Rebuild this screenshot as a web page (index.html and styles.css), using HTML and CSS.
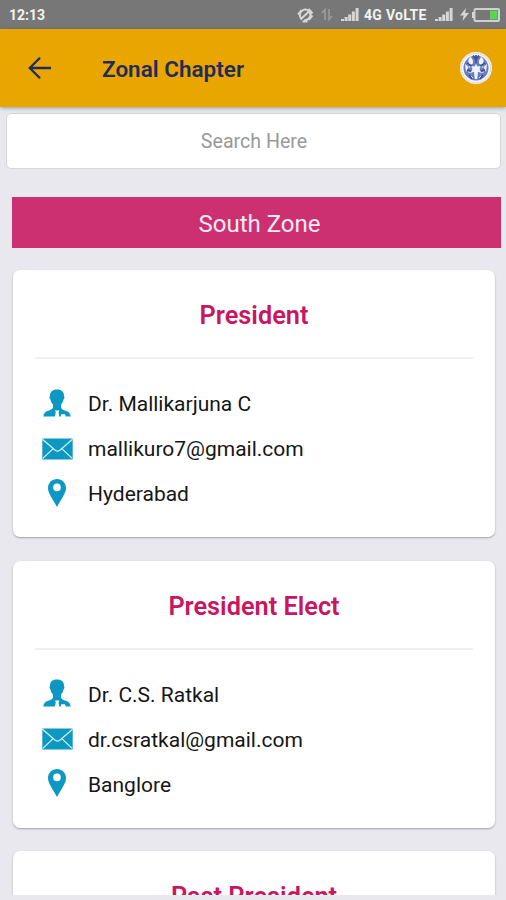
FILE: index.html
```html
<!DOCTYPE html>
<html lang="en">
<head>
    <meta charset="UTF-8">
    <meta name="viewport" content="width=device-width, initial-scale=1.0">
    <title>Zonal Chapter</title>
    <link rel="stylesheet" href="styles.css">
</head>
<body>

    <!-- Icons shared by the cards -->
    <svg class="icon-defs" width="0" height="0">
        <symbol id="icon-user" viewBox="0 0 28 28">
            <path d="M14 .5c-4.800 0-7 2.300-7 6.500-.8.700-.6 2.500.5 3.400.5 2.400 1.300 3.900 2.500 5v3.400c-1 1.800-3.200 2.400-5.600 3.300C2 23.100.8 24.300.3 27.500h11.600l.9-4.200-.8-1.800h4.400l-.8 1.800.5 4.200h1.700l.2-2.200h3.800l1.200 2.200h4.700c-.5-3.200-1.700-4.400-4.300-5.400-2.400-.9-4.400-1.500-5.400-3.300v-3.400c1.200-1.100 2-2.600 2.500-5 1.100-.9 1.300-2.700.5-3.400 0-4.200-2.200-6.500-7-6.500z"/>
        </symbol>
        <symbol id="icon-mail" viewBox="0 0 31 22">
            <rect x="0.3" y="0.5" width="30.4" height="21" rx="0.5"/>
            <path class="fold" d="M0.500 1.200L13.200 12.200Q15.500 14 17.800 12.200L30.500 1.200M0.800 20.400L11.200 10.600M30.200 20.400L19.800 10.600"/>
        </symbol>
        <symbol id="icon-pin" viewBox="0 0 18 28">
            <path fill-rule="evenodd" d="M9 0C4 0 0 3.900 0 8.900 0 14 4.500 19.500 9 28c4.500-8.500 9-14 9-19.100C18 3.900 14 0 9 0zm0 4.600a3.800 3.800 0 1 1 0 7.600 3.800 3.800 0 0 1 0-7.600z"/>
        </symbol>
        <symbol id="icon-signal" viewBox="0 0 18 13">
            <path d="M0 13v-2h3v2zM3.600 13V9h3v4zM7.200 13V6.500h3V13zM10.900 13V3.500h3V13zM14.600 13V0h3v13z"/>
        </symbol>
    </svg>

    <div class="screen">

        <!-- Status Bar -->
        <div class="status-bar">
            <span class="clock">12:13</span>
            <div class="status-icons">
                <svg class="mute" width="17" height="16" viewBox="0 0 17 16">
                    <path d="M4 11.500C1.500 7.500 3.500 3.500 7.500 2.500 11 2 13 4.500 13.500 8c-.5 3-2.500 5-6.500 5.500M1 7.500L4.500 3M11.500 2l4 4.500M15.500 8.500L12 13M5.500 14.500h5M3.500 12.500L13 3.500"/>
                </svg>
                <svg class="data" width="12" height="13" viewBox="0 0 12 13">
                    <path d="M4 12V1.500L1 5M8 1v10.500L11 8"/>
                </svg>
                <svg class="signal" width="18" height="13"><use href="#icon-signal"/></svg>
                <span class="network">4G VoLTE</span>
                <svg class="signal" width="18" height="13"><use href="#icon-signal"/></svg>
                <svg class="bolt" width="9" height="13" viewBox="0 0 9 13">
                    <path d="M6 0L0 7.500h3.600L2.500 13 9 5H5.200z"/>
                </svg>
                <svg class="battery" width="28" height="14" viewBox="0 0 28 14">
                    <rect class="case" x="2.500" y="1" width="24.500" height="12" rx="1"/>
                    <rect class="tip" x="0" y="4" width="2" height="6"/>
                    <rect class="charge" x="18" y="2.500" width="7.500" height="9"/>
                </svg>
            </div>
        </div>

        <!-- Header -->
        <div class="header">
            <svg class="back" width="24" height="24" viewBox="0 0 24 24">
                <path d="M23 12H2M12 1.800L1.800 12 12 22.200"/>
            </svg>
            <h1>Zonal Chapter</h1>
            <svg class="logo" width="34" height="34" viewBox="0 0 34 34">
                <circle class="disc" cx="17" cy="17" r="16"/>
                <circle class="ring" cx="17" cy="17" r="14.600"/>
                <circle class="inner" cx="17" cy="17" r="12.500"/>
                <path class="white" d="M12 6c-3 1-3.500 5-1 7.500 2.500.5 3.500-1.500 3-4zM22 6c3 1 3.500 5 1 7.500-2.500.5-3.500-1.500-3-4zM17 13l1.500 2.500 3.500-.5-1.500 3 1.500 3.500-3-.5-.8 7h-2.400l-.8-7-3 .5 1.500-3.500-1.500-3 3.500.5zM6 13l3.500 3L7 21zM28 13l-3.500 3 2.500 5z"/>
                <path class="lines" d="M17 4v8M14 4.500l3 4 3-4M8 12l5 3M26 12l-5 3M10 24l3 4M24 24l-3 4M8 19l4 1M26 19l-4 1"/>
                <path class="dots" d="M9 21l4 1M25 21l-4 1M12 25l2 2M22 25l-2 2M10 15l1 2M24 15l-1 2"/>
            </svg>
        </div>

        <!-- Main Content -->
        <div class="content">
            <input type="text" class="search" placeholder="Search Here">

            <h2 class="zone">South Zone</h2>

            <div class="card">
                <h3>President</h3>
                <ul>
                    <li><svg class="user"><use href="#icon-user"/></svg><span>Dr. Mallikarjuna C</span></li>
                    <li><svg class="mail"><use href="#icon-mail"/></svg><span>mallikuro7@gmail.com</span></li>
                    <li><svg class="pin"><use href="#icon-pin"/></svg><span>Hyderabad</span></li>
                </ul>
            </div>

            <div class="card">
                <h3>President Elect</h3>
                <ul>
                    <li><svg class="user"><use href="#icon-user"/></svg><span>Dr. C.S. Ratkal</span></li>
                    <li><svg class="mail"><use href="#icon-mail"/></svg><span>dr.csratkal@gmail.com</span></li>
                    <li><svg class="pin"><use href="#icon-pin"/></svg><span>Banglore</span></li>
                </ul>
            </div>

            <div class="card">
                <h3>Past President</h3>
            </div>
        </div>

    </div>

</body>
</html>
```

FILE: styles.css
```css
/* Basic styling for the page */
* {
    box-sizing: border-box;
}

body {
    font-family: Roboto, sans-serif;
    margin: 0;
    background-color: #e8e8ee;
    overflow: hidden;
}

h1, h2, h3, ul {
    margin: 0;
    padding: 0;
}

svg {
    display: block;
    flex-shrink: 0;
}

.icon-defs {
    display: none;
}

.screen {
    display: flex;
    flex-direction: column;
    height: 900px;
    padding-bottom: 5px;
}

/* Status Bar */
.status-bar {
    display: flex;
    justify-content: space-between;
    align-items: center;
    height: 29px;
    padding: 0 6px 0 9px;
    flex-shrink: 0;
    background-color: #777777;
    color: #f2f2f2;
    font-size: 14px;
    font-weight: 700;
}

.status-icons {
    display: flex;
    align-items: center;
    fill: #d6d6d6;
}

.mute {
    fill: none;
    stroke: #d6d6d6;
    stroke-width: 2;
    margin-right: 7px;
}

.data {
    fill: none;
    stroke: #9b9b9b;
    stroke-width: 1.6;
    margin-right: 8px;
}

.network {
    width: 63px;
    margin: 0 8px 0 5px;
    font-size: 14px;
    letter-spacing: 0.3px;
    white-space: nowrap;
}

.bolt {
    margin: 0 3px 0 7px;
}

.battery .case {
    fill: #777777;
    stroke: #d0d0d0;
    stroke-width: 2;
}

.battery .charge {
    fill: #5fd255;
}

/* Header */
.header {
    display: flex;
    align-items: center;
    height: 78px;
    padding: 0 13px 0 28px;
    flex-shrink: 0;
    z-index: 1;
    background-color: #e9a600;
    box-shadow: 0 1px 4px rgba(60, 80, 110, 0.5);
}

.back {
    fill: none;
    stroke: #1f2c5c;
    stroke-width: 2.3;
}

.header h1 {
    flex: 1;
    margin-left: 50px;
    padding-top: 2px;
    color: #1f2c5c;
    font-size: 22.5px;
    font-weight: 600;
}

.logo .disc {
    fill: #f4f4fa;
}

.logo .ring {
    fill: none;
    stroke: #c3c7e2;
    stroke-width: 1;
    stroke-dasharray: 1.5 1;
}

.logo .inner {
    fill: #6b7cbd;
}

.logo .white {
    fill: #f1f3fb;
}

.logo .lines {
    fill: none;
    stroke: #3a4d9d;
    stroke-width: 1.4;
}

.logo .dots {
    fill: none;
    stroke: #cdd4ee;
    stroke-width: 1;
}

/* Main Content */
.content {
    flex: 1;
    min-height: 0;
    overflow: hidden;
    padding: 6px 5px 0 6px;
}

.search {
    display: block;
    width: 495px;
    height: 56px;
    padding: 1px 0 0 1px;
    border: 1px solid #d5d5da;
    border-radius: 5px;
    background-color: white;
    font-family: inherit;
    font-size: 19.6px;
    text-align: center;
}

.search::placeholder {
    color: #999999;
}

.zone {
    height: 51px;
    margin: 28px 0 22px 6px;
    padding-left: 6px;
    line-height: 54px;
    background-color: #cd3070;
    color: #fdeaf2;
    font-size: 24px;
    font-weight: 400;
    text-align: center;
}

/* Cards */
.card {
    height: 267px;
    margin: 0 6px 23.5px 7px;
    padding: 0 22px;
    border-radius: 7px;
    background-color: white;
    box-shadow: 0 1px 2px rgba(0, 0, 0, 0.3);
}

.card h3 {
    height: 89px;
    line-height: 91px;
    border-bottom: 2px solid #f0f0f1;
    color: #c8175f;
    font-size: 25.3px;
    font-weight: 600;
    text-align: center;
}

.card ul {
    padding-top: 22px;
    list-style: none;
}

.card li {
    display: grid;
    grid-template-columns: 44px 1fr;
    column-gap: 9px;
    align-items: center;
    height: 45px;
    color: #161616;
    font-size: 21px;
}

.card li span {
    padding-top: 1px;
}

.card li svg {
    justify-self: center;
    margin-bottom: 2px;
    fill: #0d97c3;
}

.user {
    width: 28px;
    height: 28px;
}

.card li .mail {
    width: 31px;
    height: 22px;
    margin-bottom: 0;
}

.pin {
    width: 18px;
    height: 28px;
}

.fold {
    fill: none;
    stroke: #d3edf6;
    stroke-width: 1.3;
}
```
